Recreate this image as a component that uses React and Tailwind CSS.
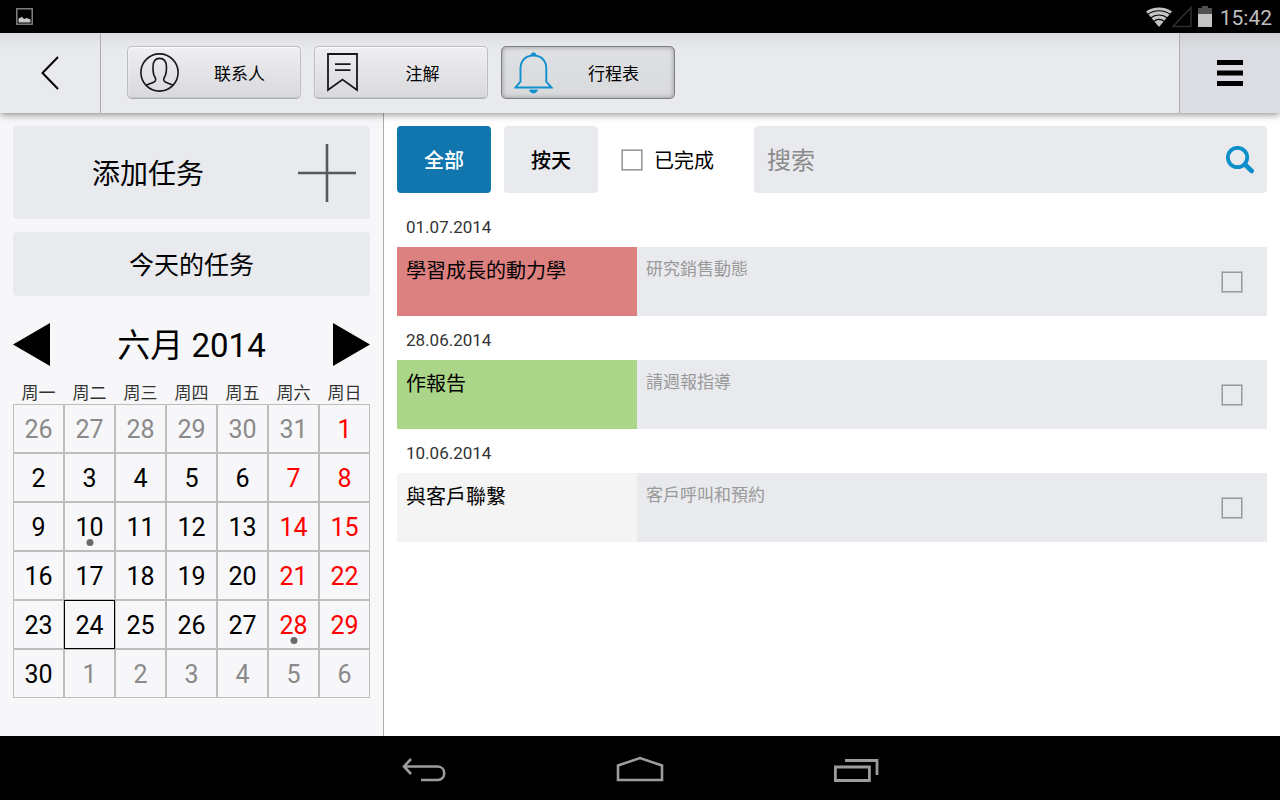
import { useState } from 'react';

const weekDays = ['周一', '周二', '周三', '周四', '周五', '周六', '周日'];

const weeks = [
  [26, 27, 28, 29, 30, 31, 1],
  [2, 3, 4, 5, 6, 7, 8],
  [9, 10, 11, 12, 13, 14, 15],
  [16, 17, 18, 19, 20, 21, 22],
  [23, 24, 25, 26, 27, 28, 29],
  [30, 1, 2, 3, 4, 5, 6],
];

const busyDays = [10, 28];
const today = 24;

const tasks = [
  { id: 1, date: '01.07.2014', title: '學習成長的動力學', note: '研究銷售動態', color: 'bg-[#dd8080]' },
  { id: 2, date: '28.06.2014', title: '作報告', note: '請週報指導', color: 'bg-[#abd588]' },
  { id: 3, date: '10.06.2014', title: '與客戶聯繫', note: '客戶呼叫和預約', color: 'bg-[#f4f4f4]' },
];

const checkboxClass =
  'appearance-none w-[22px] h-[22px] shrink-0 border border-[#bfc0c2] shadow-[inset_0_0_0_1px_#98999c] checked:bg-[#1175ae]';

const PersonIcon = () => (
  <svg width="39" height="39" viewBox="0 0 39 39" fill="none" stroke="#16181d" strokeWidth="1.6">
    <circle cx="19.5" cy="19.5" r="18.6" />
    <path d="M6 32.5c2-1.6 6-2.4 8.200-3.500 1.200-.600 1.600-1.400 1.500-2.700 0-1.700-1.300-2.700-1.900-4.600-.500-1.500-.900-4-.800-7.500 0-6 2-8.800 6.500-8.800s7 2.800 7 8.800c0 3.500-.400 6-.900 7.500-.600 1.900-1.900 2.900-1.900 4.600-.100 1.300.300 2.100 1.500 2.700 2.200 1.100 6 1.900 8 3.500" />
  </svg>
);

const NoteIcon = () => (
  <svg width="31" height="39" viewBox="0 0 31 39" fill="none" stroke="#16181d" strokeWidth="1.8">
    <path d="M1 1h29v36l-14.500-10.500L1 37zM8 11.200h15.500M8 17.200h15.500" />
  </svg>
);

const BellIcon = () => (
  <svg width="39" height="42" viewBox="0 0 39 42" fill="none" stroke="#1090cd" strokeWidth="1.900">
    <path d="M6.500 16.500C6.500 8.500 12 3.500 19.500 3.500s12.800 5 12.800 13v13.200l5.200 5.800H1.500l5-5.800z" />
    <path d="M17 3.200a2.500 2.400 0 0 1 5 0zM15.500 38h8c-.500 2-2 3-4 3s-3.500-1-4-3z" fill="#1090cd" strokeWidth=".8" />
  </svg>
);

const tabs = [
  { label: '联系人', Icon: PersonIcon },
  { label: '注解', Icon: NoteIcon },
  { label: '行程表', Icon: BellIcon },
];

const StatusBar = () => (
  <div className="flex h-[33px] items-center justify-between bg-black pl-4 pr-2 text-[#bebebe]">
    <svg width="17" height="17" viewBox="0 0 17 17">
      <rect x=".8" y=".8" width="15.400" height="15.400" fill="none" stroke="#8a8a8a" strokeWidth="1.400" />
      <path d="M2.500 14.500V11l1-1.300h1.200L6 8.700l2 2.200 1.500-.4 1-.8 1.500 1.100h1.500l1 1.200v2.500z" fill="#c8c8c8" />
    </svg>
    <div className="flex items-center">
      {/* wifi */}
      <svg width="26" height="20" viewBox="0 0 26 20" fill="none">
        <path d="M13 20 0 4.500C7-1 19-1 26 4.500z" fill="#c4c4c4" />
        <path d="M1.500 7.500c6.500-5 16.500-5 23 0M4.500 11c5-4 12-4 17 0M7.500 14.500c3.500-2.700 7.500-2.700 11 0" stroke="#000" strokeWidth="1.100" />
      </svg>
      <svg width="20" height="22" viewBox="0 0 20 22" className="mr-[6px]">
        <path d="M19 1.500V20.500H1z" fill="none" stroke="#303030" strokeWidth="1.500" />
      </svg>
      <svg width="14" height="21" viewBox="0 0 14 21" className="mr-2">
        <path d="M0 2h4V0h6v2h4v6H0z" fill="#505050" />
        <path d="M0 8h14v13H0z" fill="#c4c4c4" />
      </svg>
      <span className="pt-[2px] text-[21px] leading-6">15:42</span>
    </div>
  </div>
);

const Header = ({ tab, onTab }) => (
  <header className="relative z-10 flex h-20 bg-linear-to-b from-[#dcdde0] via-[#e9eaee] via-20% to-[#e9eaee] shadow-[0_1px_8px_rgba(0,0,0,0.5)]">
    <button aria-label="返回" className="flex w-[101px] items-center justify-center border-r border-[#adadad]">
      <svg width="18" height="34" viewBox="0 0 18 34" fill="none" stroke="#000" strokeWidth="2">
        <path d="M17 1 1.500 17 17 33" />
      </svg>
    </button>
    <nav className="flex flex-1 items-start gap-[13px] pl-[26px] pt-[13px]">
      {tabs.map(({ label, Icon }) => (
        <button
          key={label}
          onClick={() => onTab(label)}
          className={`flex h-[53px] w-[174px] items-center rounded-[5px] border pl-3 text-[17px] leading-6 ${
            tab === label
              ? 'border-[#7e7f84] bg-linear-to-b from-[#dfe0e3] to-[#d9dadc] shadow-[inset_0_0_5px_#8f9094]'
              : 'border-[#bcbdc0] border-b-[#a9aaae] bg-linear-to-b from-[#efeff2] to-[#d8d9dc] shadow-[inset_0_1px_2px_#ffffff,inset_0_-1px_1px_#c4c5c8]'
          }`}
        >
          <Icon />
          <span className="flex-1 pt-[2px] text-center">{label}</span>
        </button>
      ))}
    </nav>
    <button aria-label="菜单" className="flex w-[101px] items-center justify-center border-l border-[#adadad] bg-linear-to-b from-[#d0d1d5] via-[#dcdde2] via-20% to-[#dcdde2]">
      <svg width="26" height="26" viewBox="0 0 26 26">
        <path d="M0 0h26v5H0zM0 10.500h26v5H0zM0 21h26v5H0z" />
      </svg>
    </button>
  </header>
);

const Calendar = () => {
  const dayColor = (week, col, day) => {
    if ((week === 0 && day > 7) || (week === 5 && day < 7)) return 'text-[#8a8a8a]';
    return col > 4 ? 'text-[#ff0000]' : 'text-black';
  };

  return (
    <section className="mt-[27px]">
      <div className="flex h-[43px] items-center justify-between">
        <button aria-label="上个月">
          <svg width="37" height="43" viewBox="0 0 37 43"><path d="M37 0v43L0 21.500z" /></svg>
        </button>
        <h2 className="pt-[2px] text-[33px] leading-10">六月 2014</h2>
        <button aria-label="下个月">
          <svg width="37" height="43" viewBox="0 0 37 43"><path d="M0 0v43l37-21.500z" /></svg>
        </button>
      </div>
      <table className="mt-4 w-full table-fixed border-separate border-spacing-0">
        <thead>
          <tr>
            {weekDays.map((name) => (
              <th key={name} className="h-[22px] p-0 text-[17px] font-normal leading-5 text-[#333]">{name}</th>
            ))}
          </tr>
        </thead>
        <tbody>
          {weeks.map((week, w) => (
            <tr key={w}>
              {week.map((day, col) => {
                const color = dayColor(w, col, day);
                return (
                  <td key={col} className={`h-[49px] border p-0 ${day === today ? 'border-black' : 'border-[#bdbdbd]'}`}>
                    <button className={`relative block h-[47px] w-full pt-[2px] text-[25px] leading-[45px] ${color}`}>
                      {day}
                      {w > 0 && busyDays.includes(day) && (
                        <span className="absolute bottom-1 left-1/2 h-[7px] w-[7px] -translate-x-1/2 rounded-full bg-[#6a6a6a]"></span>
                      )}
                    </button>
                  </td>
                );
              })}
            </tr>
          ))}
        </tbody>
      </table>
    </section>
  );
};

const Sidebar = () => (
  <aside className="w-96 shrink-0 border-r border-[#adadad] bg-[#f7f7f9] p-[13px]">
    <button className="flex h-[93px] w-full items-center rounded bg-[#e9eaee]">
      <span className="flex-1 pt-1 text-center text-[28px] leading-10">添加任务</span>
      <span className="flex w-[87px] justify-center">
        <svg width="58" height="58" viewBox="0 0 58 58" stroke="#58595b" strokeWidth="2.600">
          <path d="M0 29h58M29 0v58" />
        </svg>
      </span>
    </button>
    <button className="mt-[13px] block h-16 w-full rounded bg-[#e9eaee] pt-1 text-[25px] leading-10">今天的任务</button>
    <Calendar />
  </aside>
);

const TaskList = () => {
  const [filter, setFilter] = useState('全部');

  return (
    <main className="min-w-0 flex-1 bg-white p-[13px]">
      {/* Filters */}
      <div className="mb-[10px] flex h-[67px]">
        {['全部', '按天'].map((name) => (
          <button
            key={name}
            onClick={() => setFilter(name)}
            className={`mr-[13px] w-[94px] rounded pt-[2px] text-xl font-medium ${
              filter === name ? 'bg-[#1175ae] text-white' : 'bg-[#e9eaee] text-black'
            }`}
          >
            {name}
          </button>
        ))}
        <label className="ml-[10px] mr-10 flex items-center gap-[11px] whitespace-nowrap text-xl">
          <input type="checkbox" className={checkboxClass} />
          <span className="pt-[2px]">已完成</span>
        </label>
        <div className="flex min-w-0 flex-1 items-center rounded bg-[#e9eaee] px-[13px]">
          <input
            type="search"
            aria-label="搜索"
            placeholder="搜索"
            className="h-10 min-w-0 flex-1 bg-transparent pt-[2px] text-2xl outline-none placeholder:text-[#8b8b8b]"
          />
          <button aria-label="开始搜索">
            <svg width="28" height="28" viewBox="0 0 28 28" fill="none" stroke="#0d8fcb">
              <circle cx="11.500" cy="11.500" r="9.700" strokeWidth="3.800" />
              <path d="m19 18.500 6.700 6.500" strokeWidth="4.600" strokeLinecap="round" />
            </svg>
          </button>
        </div>
      </div>

      {/* Tasks */}
      <ul>
        {tasks.map((task) => (
          <li key={task.id}>
            <p className="h-11 pl-[9px] pt-3 text-[17px] leading-6 text-[#333]">{task.date}</p>
            <div className="flex h-[69px] bg-[#e9eaee]">
              <h3 className={`w-60 px-[9px] pt-[10px] text-xl leading-7 ${task.color}`}>{task.title}</h3>
              <p className="flex-1 px-[9px] pt-[10px] text-[17px] leading-6 text-[#999]">{task.note}</p>
              <div className="flex items-center pr-6">
                <input type="checkbox" aria-label={task.title} className={checkboxClass} />
              </div>
            </div>
          </li>
        ))}
      </ul>
    </main>
  );
};

const NavBar = () => (
  <nav className="flex h-16 items-center justify-center bg-black">
    <button aria-label="后退" className="flex w-[216px] justify-center pt-1">
      <svg width="44" height="24" viewBox="0 0 44 24" fill="none" stroke="#9c9c9c" strokeWidth="2.600">
        <path d="M9 1 2 8.500 9 16M2 8.500h33.500c9 0 9 13.500 0 13.500H19" />
      </svg>
    </button>
    <button aria-label="主屏幕" className="flex w-[216px] justify-center pt-[2px]">
      <svg width="48" height="26" viewBox="0 0 48 26" fill="none" stroke="#9c9c9c" strokeWidth="2.600">
        <path d="M2 24V9.500L24 2l22 7.500V24z" />
      </svg>
    </button>
    <button aria-label="最近任务" className="flex w-[216px] justify-center pt-1">
      <svg width="46" height="24" viewBox="0 0 46 24" fill="none" stroke="#9c9c9c" strokeWidth="2.800">
        <path d="M2.400 9h34v13.500h-34zM12 2.500H44v14.500" />
      </svg>
    </button>
  </nav>
);

export default function App() {
  const [tab, setTab] = useState('行程表');

  return (
    <div className="flex min-h-screen flex-col bg-black font-['Roboto','Noto_Sans_CJK_SC',sans-serif] text-black">
      <StatusBar />
      <Header tab={tab} onTab={setTab} />
      <div className="flex flex-1">
        <Sidebar />
        <TaskList />
      </div>
      <NavBar />
    </div>
  );
}
